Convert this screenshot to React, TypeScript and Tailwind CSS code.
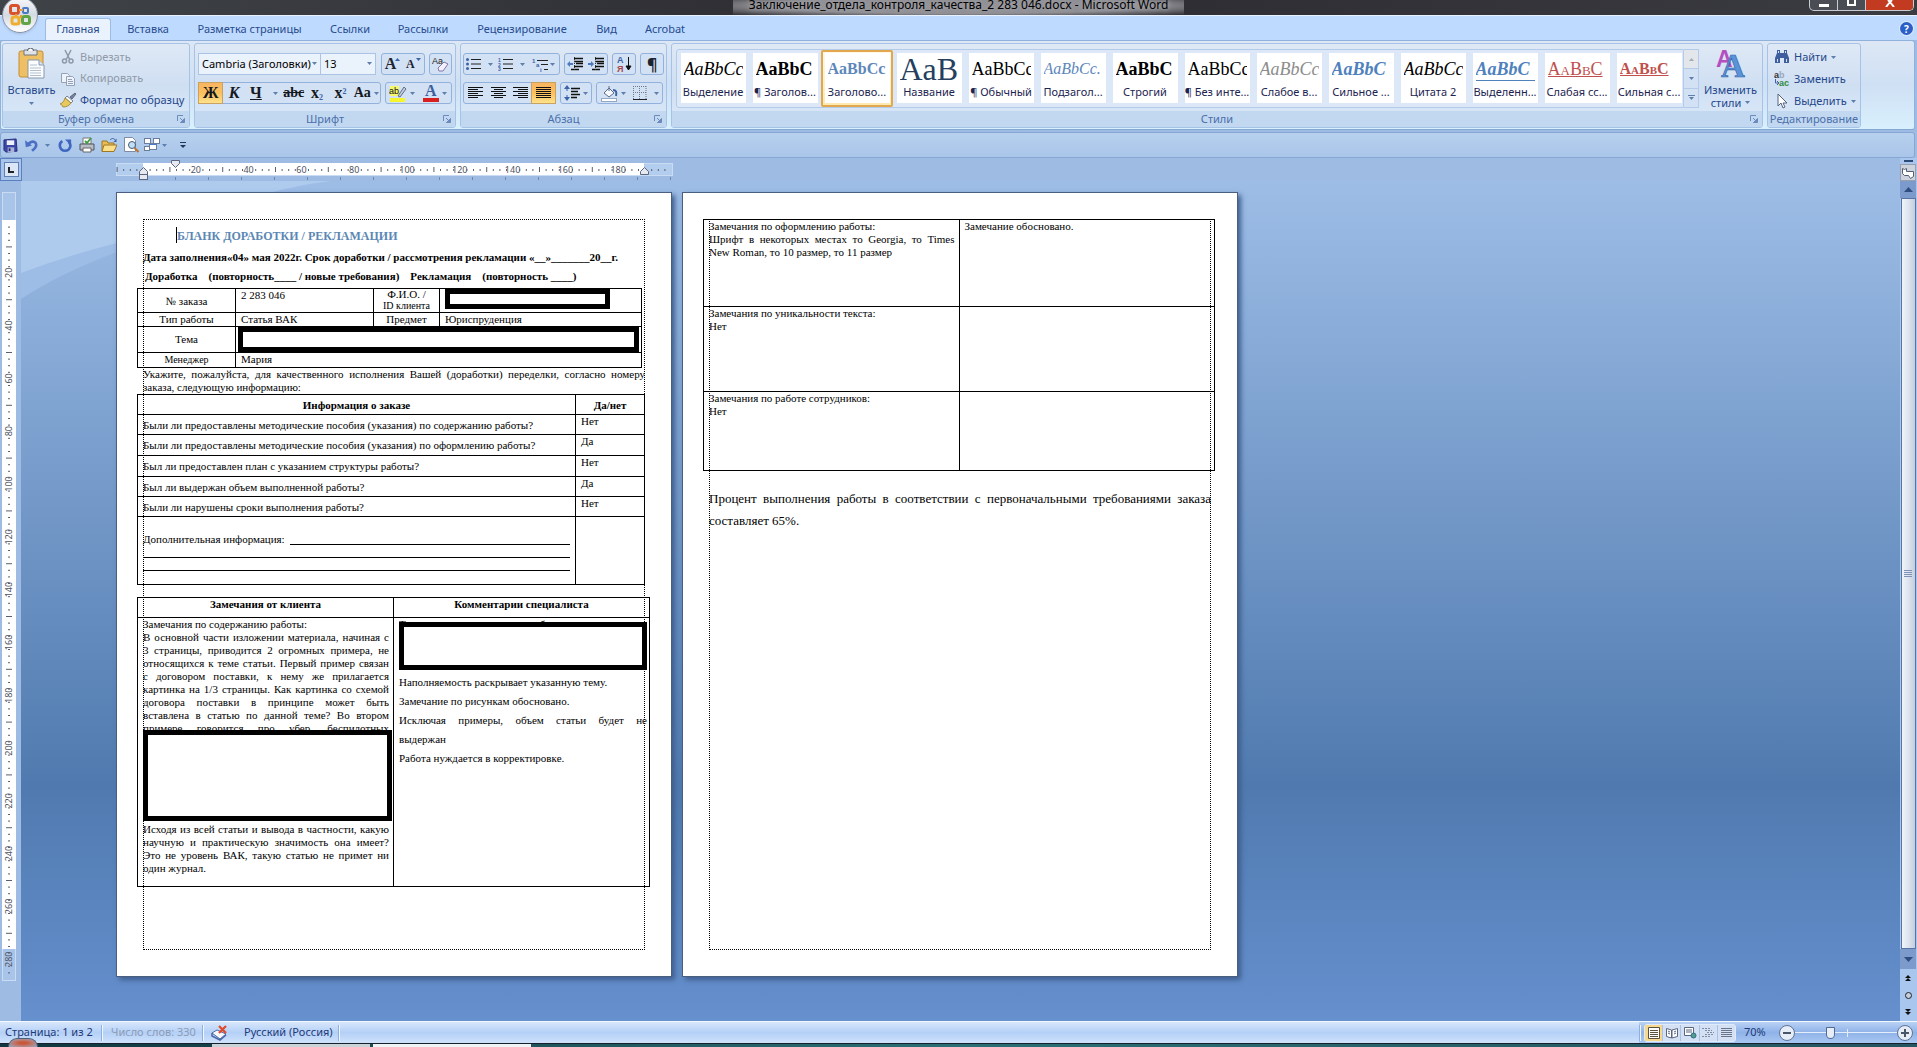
import React from "react";

const UI = "font-['Noto_Sans','Open_Sans',sans-serif]";
const SERIF = "font-['Liberation_Serif',serif]";

function Caret({ className = "" }: { className?: string }) {
  return (
    <svg className={`shrink-0 ${className}`} width="5" height="3" viewBox="0 0 5 3" aria-hidden="true">
      <path d="M0 0h5L2.500 3z" fill="#5d7fae" />
    </svg>
  );
}

function Launcher() {
  return (
    <button aria-label="Параметры" className="absolute right-1 top-1 h-2 w-2">
      <svg width="8" height="8" viewBox="0 0 8 8" fill="none" stroke="#6a8bbb">
        <path d="M.5 6V.5H6M3 3l3 3" />
        <path d="M7.500 3.500v4h-4z" fill="#6a8bbb" />
      </svg>
    </button>
  );
}

function Group({ label, className = "", launcher = true, children }: { label: string; className?: string; launcher?: boolean; children: React.ReactNode }) {
  return (
    <section
      aria-label={label}
      className={`flex h-[85px] flex-col overflow-hidden rounded-[3px] border border-[#a5c3e6] bg-linear-to-b from-[#dfe9f6] via-[#cfdff2] to-[#dceafa] ${className}`}
    >
      <div className="min-h-0 flex-1">{children}</div>
      <div className="relative h-4 shrink-0 bg-[#c2d8f1] text-center leading-4 whitespace-nowrap text-[#4a6fa9]">
        {label}
        {launcher && <Launcher />}
      </div>
    </section>
  );
}

function Tools({ className = "", children }: { className?: string; children: React.ReactNode }) {
  return <div className={`flex h-[22px] items-stretch rounded-[3px] border border-[#92b1dc] bg-[#d2e1f4] ${className}`}>{children}</div>;
}

function Tool({ label, on = false, className = "", children }: { label: string; on?: boolean; className?: string; children: React.ReactNode }) {
  return (
    <button
      aria-label={label}
      className={`flex min-w-0 flex-1 items-center justify-center gap-[3px] ${on ? "bg-linear-to-b from-[#f9b563] via-[#fbc05c] to-[#fde28b] ring-1 ring-[#c9a25f]" : ""} ${className}`}
    >
      {children}
    </button>
  );
}

function Lines({ widths, align }: { widths: number[]; align: "l" | "c" | "r" }) {
  return (
    <svg width="15" height="12" viewBox="0 0 15 12" shapeRendering="crispEdges">
      {widths.map((w, i) => (
        <rect key={i} x={align === "l" ? 0 : align === "r" ? 15 - w : (15 - w) / 2} y={i * 2} width={w} height="1" fill="#111" />
      ))}
    </svg>
  );
}

function ListIcon({ marks }: { marks: string[] }) {
  return (
    <svg width="15" height="14" viewBox="0 0 15 14">
      {marks.map((m, i) => (
        <g key={i}>
          {m === "•" ? (
            <circle cx="1.500" cy={2.5 + i * 4.5} r="1.500" fill="#3c62a8" />
          ) : (
            <text x="0" y={5 + i * 4.5} fontSize="5" fontWeight="bold" fill="#3c62a8" fontFamily="Liberation Sans">
              {m}
            </text>
          )}
          <rect x="5" y={2 + i * 4.5} width="10" height="1" fill="#222" />
        </g>
      ))}
    </svg>
  );
}

function IndentIcon({ right = false }: { right?: boolean }) {
  return (
    <svg width="17" height="14" viewBox="0 0 17 14">
      <path d="M7 1.500h9M7 4.500h9M9 6.500h7M7 9.500h9M4 12.500h8" stroke="#111" strokeWidth="1.300" />
      <path d="M7.500 0v14" stroke="#333" strokeDasharray="1 1" />
      <path d={right ? "M6 7L3 4v2H0v2h3v2z" : "M0 7l3-3v2h3v2H3v2z"} fill="#4d77bf" />
    </svg>
  );
}

function Gem() {
  return (
    <svg width="24" height="26" viewBox="0 0 24 26">
      <g fill="none" strokeWidth="3">
        <rect x="2.500" y="3.500" width="8" height="8" rx="2" stroke="#d9512c" />
        <rect x="15" y="6" width="5" height="5" rx="1" stroke="#4a7ac4" strokeWidth="2" />
        <rect x="4" y="15" width="7" height="7" rx="2" stroke="#f0ae2e" />
        <rect x="14.500" y="14.500" width="7" height="7" rx="2" stroke="#5fa545" />
      </g>
      <path d="M11 8h4M13 13v3M8 12v2" stroke="#e89b3c" strokeWidth="2" />
    </svg>
  );
}

function PasteIcon() {
  return (
    <svg width="27" height="31" viewBox="0 0 27 31">
      <rect x="1" y="3" width="24" height="26" rx="2" fill="#eebf63" stroke="#c48f38" />
      <path d="M6 2h13v5H6z" fill="#dfe3e8" stroke="#6f7680" />
      <path d="M9.500 3a3 3 0 0 1 6 0" fill="#f7f7f7" stroke="#4c5560" />
      <path d="M10 12h11l5 5v13H10z" fill="#fcfdff" stroke="#8797ae" />
      <path d="M21 12v5h5" fill="#dbe4f2" stroke="#8797ae" />
      <path d="M12 17h7M12 20h11M12 22.500h11M12 25h11M12 27.500h11" stroke="#b4bfce" />
    </svg>
  );
}

function ScissorsIcon() {
  return (
    <svg width="16" height="16" viewBox="0 0 16 16" fill="none" stroke="#8d98a8">
      <path d="M5 1l4.500 9M11 1L6.500 10" strokeWidth="1.500" />
      <circle cx="4.500" cy="12" r="2" strokeWidth="1.500" />
      <circle cx="11" cy="12" r="2" strokeWidth="1.500" />
    </svg>
  );
}

function CopyIcon() {
  return (
    <svg width="16" height="16" viewBox="0 0 16 16" fill="#eef3fa" stroke="#93a2b8">
      <path d="M1.500 2.500h6l2 2v7h-8z" />
      <path d="M6.500 5.500h6l2 2v7h-8z" />
      <path d="M8 8.500h4M8 10.500h5M8 12.500h5" />
    </svg>
  );
}

function BrushIcon() {
  return (
    <svg width="17" height="16" viewBox="0 0 17 16">
      <path d="M10 5l5-4 1 1-4 5z" fill="#7a86a0" stroke="#3f4a63" strokeWidth=".7" />
      <path d="M7 4l6 5-2 2-6-5z" fill="#f5f7fa" stroke="#5b667c" strokeWidth=".8" />
      <path d="M5 6l6 5c-2 3-5 4-8 4-1-2-2-3-3-3 3-1 4-3 5-6z" fill="#e9c95f" stroke="#98812d" strokeWidth=".8" />
    </svg>
  );
}

const svg16 = { width: 16, height: 16, viewBox: "0 0 16 16" };

function SaveIcon() {
  return (
    <svg {...svg16} width="15" height="15">
      <path d="M1 2l13-1 1 13-12 1-2-2z" fill="#3b46a5" stroke="#252d77" />
      <path d="M4 2.500h8v5H4z" fill="#eef1fa" />
      <path d="M5 10h7v5H5z" fill="#aab4d8" />
      <path d="M6 11h2v3H6z" fill="#252d77" />
    </svg>
  );
}
function UndoIcon() {
  return (
    <svg {...svg16} width="14" height="15" fill="none">
      <path d="M4 6c5-5 11-1 8 4-1 2-3 3-4 4" stroke="#4a6fc4" strokeWidth="3" />
      <path d="M0 2l1 8 7-2z" fill="#4a6fc4" />
    </svg>
  );
}
function RedoIcon() {
  return (
    <svg {...svg16} width="14" height="15" fill="none">
      <path d="M5 3C0 6 2 14 8 14s8-7 4-10" stroke="#3f66c0" strokeWidth="3" />
      <path d="M8 1h7v7z" fill="#3f66c0" />
    </svg>
  );
}
function PrintIcon() {
  return (
    <svg {...svg16}>
      <path d="M4 1h8v6H4z" fill="#fff" stroke="#777" />
      <path d="M1 7h14v6H1z" fill="#b7bcc5" stroke="#4e545e" />
      <path d="M4 11h8v4H4z" fill="#fff" stroke="#666" />
      <path d="M6 4l2 2 4-5" fill="none" stroke="#3d9c3d" strokeWidth="1.800" />
    </svg>
  );
}
function OpenIcon() {
  return (
    <svg {...svg16}>
      <path d="M1 4h5l1 2h6v8H1z" fill="#e9bd55" stroke="#9d7724" />
      <path d="M3 8h13l-3 6.500H1z" fill="#fbdf8b" stroke="#9d7724" />
      <path d="M9 3c2-2 4-2 5 0" fill="none" stroke="#3c62a8" />
      <path d="M15.500 1.500V5h-3z" fill="#3c62a8" />
    </svg>
  );
}
function PreviewIcon() {
  return (
    <svg {...svg16}>
      <path d="M1.500.5h8l3 3v11h-11z" fill="#fff" stroke="#7d8ba3" />
      <circle cx="9" cy="8" r="3.500" fill="#bfe0f5" stroke="#4d5a70" />
      <path d="M11.500 11l4 4" stroke="#b97634" strokeWidth="2" />
    </svg>
  );
}
function WindowsIcon() {
  return (
    <svg {...svg16} fill="#fff" stroke="#6b7d9a">
      <rect x=".5" y="1.500" width="6" height="5" />
      <rect x="9.500" y="1.500" width="6" height="5" />
      <rect x=".5" y="9.500" width="5" height="4" />
      <rect x="5.500" y="6.500" width="7" height="6" />
      <path d="M5.500 7.500h7" stroke="#4b78c8" />
    </svg>
  );
}

const TILES: { name: string; text: string; cls: string; on?: boolean }[] = [
  { name: "Выделение", text: "AaBbCc", cls: "text-lg italic text-black" },
  { name: "¶ Заголов...", text: "AaBbC", cls: "text-lg font-bold text-black" },
  { name: "Заголово...", text: "AaBbCc", cls: "text-base font-bold text-[#5d87bb]", on: true },
  { name: "Название", text: "AaB", cls: "text-[32px] text-[#243f60]" },
  { name: "¶ Обычный", text: "AaBbCc", cls: "text-lg text-black" },
  { name: "Подзагол...", text: "AaBbCc.", cls: "text-base italic text-[#5d87bb]" },
  { name: "Строгий", text: "AaBbC", cls: "text-lg font-bold text-black" },
  { name: "¶ Без инте...", text: "AaBbCc", cls: "text-lg text-black" },
  { name: "Слабое в...", text: "AaBbCc", cls: "text-lg italic text-[#8c8c8c]" },
  { name: "Сильное ...", text: "AaBbC", cls: "text-lg font-bold italic text-[#4f81bd]" },
  { name: "Цитата 2", text: "AaBbCc", cls: "text-lg italic text-black" },
  { name: "Выделенн...", text: "AaBbC", cls: "text-lg font-bold italic text-[#4f81bd] border-b border-[#4f81bd]" },
  { name: "Слабая сс...", text: "AaBbC", cls: "text-lg text-[#c0504d] underline [font-variant:small-caps]" },
  { name: "Сильная с...", text: "AaBbC", cls: "text-base font-bold text-[#c0504d] underline [font-variant:small-caps]" },
];

const TABS = [
  { name: "Вставка", w: "w-[70px]" },
  { name: "Разметка страницы", w: "w-[133px]" },
  { name: "Ссылки", w: "w-[68px]" },
  { name: "Рассылки", w: "w-[78px]" },
  { name: "Рецензирование", w: "w-[120px]" },
  { name: "Вид", w: "w-[49px]" },
  { name: "Acrobat", w: "w-[68px]" },
];

function TitleBar() {
  return (
    <header className="relative h-4 shrink-0 border-b border-[#e8f2ff] bg-linear-to-r from-[#3f4348] via-[#2b2a30] to-[#3b3b42]">
      <div className="flex h-full justify-center overflow-hidden">
        <h1 className="-mt-1 bg-radial from-[#8f8f94] from-60% to-transparent to-100% px-4 text-xs leading-[18px] text-black [text-shadow:0_0_5px_#a9a9ae,0_0_8px_#a9a9ae]">
          Заключение_отдела_контроля_качества_2 283 046.docx - Microsoft Word
        </h1>
      </div>
      <div className="absolute right-[3px] top-0 flex h-[11px] overflow-hidden rounded-b-[5px] border border-t-0 border-[#c9cdd3] bg-[#4a4d54]">
        <button aria-label="Свернуть" className="flex w-7 items-center justify-center border-r border-[#c9cdd3]">
          <span className="h-[3px] w-[10px] bg-white" />
        </button>
        <button aria-label="Развернуть" className="flex w-7 items-start justify-center border-r border-[#c9cdd3]">
          <span className="h-[6px] w-[9px] border-2 border-t-0 border-white" />
        </button>
        <button aria-label="Закрыть" className="flex w-[47px] items-start justify-center bg-[#c23a1f]">
          <svg width="10" height="7" viewBox="0 0 10 7">
            <path d="M1 7l4-5 4 5M3 0l2 2 2-2" stroke="#fff" strokeWidth="2" fill="none" />
          </svg>
        </button>
      </div>
      <button
        aria-label="Кнопка Office"
        className="absolute left-[2px] -top-[3px] z-10 flex h-9 w-9 items-center justify-center rounded-full border border-[#8793a6] bg-linear-to-b from-[#f7f8fa] via-[#d5dae2] to-white shadow"
      >
        <Gem />
      </button>
    </header>
  );
}

function TabBar() {
  return (
    <nav className="flex h-6 shrink-0 items-end bg-[#bedaff] pl-[45px] text-[#274a8c]">
      <button className="h-[22px] w-[66px] rounded-t-[3px] border border-b-0 border-[#9dbbe0] bg-[#e9f2fd]">Главная</button>
      <div className="w-[2px]" />
      {TABS.map((t) => (
        <button key={t.name} className={`h-[22px] whitespace-nowrap ${t.w}`}>
          {t.name}
        </button>
      ))}
      <button aria-label="Справка" className="mr-1 mb-[5px] ml-auto flex h-[13px] w-[13px] items-center justify-center rounded-full bg-[#2c5fc7] text-[10px] leading-none font-bold text-white ring-1 ring-[#dfe9f8]">
        ?
      </button>
    </nav>
  );
}

function Ribbon() {
  return (
    <div className="mr-[2px] flex h-[90px] shrink-0 items-start gap-1 rounded-[3px] border border-[#8fb1dc] border-b-[#86a7d4] bg-linear-to-b from-[#dde7f5] via-[#cfe0f4] to-[#d9f0fd] pt-[2px] pl-px text-[#24468a]">
      <Group label="Буфер обмена" className="w-[188px] shrink-0">
        <div className="flex h-full">
          <button className="flex w-[57px] flex-col items-center pt-1">
            <PasteIcon />
            <span className="mt-[3px] leading-4">Вставить</span>
            <Caret className="mt-1" />
          </button>
          <div className="flex flex-col pt-[2px]">
            <button className="flex h-[22px] items-center gap-1 text-[#8f99a8]"><ScissorsIcon />Вырезать</button>
            <button className="flex h-[22px] items-center gap-1 text-[#8f99a8]"><CopyIcon />Копировать</button>
            <button className="flex h-[22px] items-center gap-[3px] whitespace-nowrap"><BrushIcon />Формат по образцу</button>
          </div>
        </div>
      </Group>

      <Group label="Шрифт" className="w-[262px] shrink-0">
        <div className="flex flex-col gap-[7px] px-[3px] pt-[9px]">
          <div className="flex items-center gap-1">
            <div className="mr-px flex h-[22px]">
              <div className="relative">
                <select aria-label="Шрифт" className="h-[22px] w-[123px] appearance-none border border-[#abc4e6] bg-[#eaf2fb] pl-[3px] text-black">
                  <option>Cambria (Заголовки)</option>
                </select>
                <Caret className="pointer-events-none absolute top-[9px] right-1" />
              </div>
              <div className="relative -ml-px">
                <select aria-label="Размер шрифта" className="h-[22px] w-[56px] appearance-none border border-[#abc4e6] bg-[#eaf2fb] pl-[3px] text-black">
                  <option>13</option>
                </select>
                <Caret className="pointer-events-none absolute top-[9px] right-1" />
              </div>
            </div>
            <Tools className="w-[45px] font-['Liberation_Serif',serif] font-bold text-[#1d2430]">
              <Tool label="Увеличить размер">
                <span className="text-base leading-none">A</span>
                <svg className="mt-1 -ml-1 self-start" width="5" height="3"><path d="M0 3h5L2.500 0z" fill="#3c62a8" /></svg>
              </Tool>
              <Tool label="Уменьшить размер">
                <span className="text-xs leading-none">A</span>
                <svg className="mt-1 -ml-[2px] self-start" width="5" height="3"><path d="M0 0h5L2.500 3z" fill="#3c62a8" /></svg>
              </Tool>
            </Tools>
            <Tools className="w-6">
              <Tool label="Очистить формат">
                <svg width="18" height="17" viewBox="0 0 18 17">
                  <text x="1" y="8" fontSize="9" fill="#222" fontFamily="Liberation Sans">Aa</text>
                  <path d="M7 12l6-6 4 2-5 7H8z" fill="#f3f0fb" stroke="#8078a8" />
                </svg>
              </Tool>
            </Tools>
          </div>
          <div className="flex gap-1">
            <Tools className="w-[184px] font-['Liberation_Serif',serif] text-base text-[#14181f]">
              <Tool label="Полужирный" on className="font-bold">Ж</Tool>
              <Tool label="Курсив" className="font-bold italic">К</Tool>
              <Tool label="Подчеркнутый" className="w-9 flex-none font-bold"><span className="underline">Ч</span><Caret className="ml-2" /></Tool>
              <Tool label="Зачеркнутый" className="text-sm font-bold"><span className="line-through">abc</span></Tool>
              <Tool label="Подстрочный" className="font-bold"><span>x<sub className="text-[8px] text-[#3c62a8]">2</sub></span></Tool>
              <Tool label="Надстрочный" className="font-bold"><span>x<sup className="text-[8px] text-[#3c62a8]">2</sup></span></Tool>
              <Tool label="Регистр" className="w-7 flex-none text-sm font-bold"><span>Aa</span><Caret /></Tool>
            </Tools>
            <Tools className="w-[67px]">
              <Tool label="Выделение цветом">
                <svg width="18" height="18" viewBox="0 0 18 18">
                  <rect x="1" y="2" width="9" height="10" fill="#f7f76a" />
                  <text x="0" y="10" fontSize="9" fill="#111" fontFamily="Liberation Sans">ab</text>
                  <path d="M9 12l6-9 2 2-6 8z" fill="#c3cbe0" stroke="#46536f" strokeWidth=".8" />
                  <rect x="1" y="14" width="15" height="4" fill="#f4f62b" />
                </svg>
                <Caret />
              </Tool>
              <Tool label="Цвет текста">
                <svg width="16" height="18" viewBox="0 0 16 18">
                  <text x="2" y="12" fontSize="16" fontWeight="bold" fill="#3c5f9f" fontFamily="Liberation Serif">A</text>
                  <rect y="14" width="16" height="4" fill="#d8201f" />
                </svg>
                <Caret />
              </Tool>
            </Tools>
          </div>
        </div>
      </Group>

      <Group label="Абзац" className="w-[207px] shrink-0">
        <div className="flex flex-col gap-[7px] px-[2px] pt-[9px]">
          <div className="flex gap-1">
            <Tools className="w-[98px]">
              <Tool label="Маркеры"><ListIcon marks={["•", "•", "•"]} /><Caret className="ml-1" /></Tool>
              <Tool label="Нумерация"><ListIcon marks={["1", "2", "3"]} /><Caret className="ml-1" /></Tool>
              <Tool label="Многоуровневый список">
                <svg width="17" height="15" viewBox="0 0 17 15">
                  <text x="0" y="6" fontSize="6" fontWeight="bold" fill="#3c62a8" fontFamily="Liberation Sans">1</text>
                  <text x="4" y="10" fontSize="6" fontWeight="bold" fill="#3c62a8" fontFamily="Liberation Sans">a</text>
                  <text x="8" y="15" fontSize="6" fontWeight="bold" fill="#3c62a8" fontFamily="Liberation Sans">i</text>
                  <path d="M5 3.500h11M9 7.500h7M12 12.500h4" stroke="#222" />
                </svg>
                <Caret className="-ml-[2px]" />
              </Tool>
            </Tools>
            <Tools className="w-[45px]">
              <Tool label="Уменьшить отступ"><IndentIcon /></Tool>
              <Tool label="Увеличить отступ"><IndentIcon right /></Tool>
            </Tools>
            <Tools className="w-6">
              <Tool label="Сортировка">
                <svg width="16" height="18" viewBox="0 0 16 18">
                  <text x="1" y="8" fontSize="9" fontWeight="bold" fill="#3c62a8" fontFamily="Liberation Sans">А</text>
                  <text x="1" y="17" fontSize="9" fontWeight="bold" fill="#a8474d" fontFamily="Liberation Sans">Я</text>
                  <path d="M12.500 2v12M10 11l2.500 4 2.500-4z" stroke="#111" fill="#111" />
                </svg>
              </Tool>
            </Tools>
            <Tools className="w-6">
              <Tool label="Знаки абзаца" className="text-base font-bold text-[#1d2430]">¶</Tool>
            </Tools>
          </div>
          <div className="flex gap-1">
            <Tools className="w-[93px]">
              <Tool label="По левому краю"><Lines align="l" widths={[15, 10, 15, 10, 15, 10]} /></Tool>
              <Tool label="По центру"><Lines align="c" widths={[15, 9, 15, 9, 15, 9]} /></Tool>
              <Tool label="По правому краю"><Lines align="r" widths={[15, 10, 15, 10, 15, 10]} /></Tool>
              <Tool label="По ширине" on><Lines align="l" widths={[15, 15, 15, 15, 15, 15]} /></Tool>
            </Tools>
            <Tools className="w-8">
              <Tool label="Интервал">
                <svg width="16" height="16" viewBox="0 0 16 16">
                  <path d="M3 0l3 4H0zM3 16l3-4H0z" fill="#3c62a8" />
                  <path d="M3 3v3M3 10v3" stroke="#3c62a8" />
                  <path d="M7 3.500h9M7 6.500h7M7 9.500h9M7 12.500h6" stroke="#111" strokeWidth="1.300" />
                </svg>
                <Caret />
              </Tool>
            </Tools>
            <Tools className="w-[67px]">
              <Tool label="Заливка">
                <svg width="17" height="17" viewBox="0 0 17 17">
                  <path d="M3 8l5-5 5 5-5 4z" fill="#f6f8fb" stroke="#5b6c8a" />
                  <path d="M8 1v5" stroke="#5b6c8a" />
                  <path d="M12 5c3 0 4 2 3 6" stroke="#3c62a8" strokeWidth="2" fill="none" />
                  <rect x=".5" y="13.500" width="15" height="3" fill="#fff" stroke="#93a8c6" />
                </svg>
                <Caret />
              </Tool>
              <Tool label="Границы">
                <svg width="14" height="14" viewBox="0 0 14 14" fill="none">
                  <path d="M.5 0v13M6.500 0v13M13 0v13M0 .5h13M0 6.500h13" stroke="#6d7890" strokeDasharray="1 1" />
                  <path d="M0 13.500h14" stroke="#222" />
                </svg>
                <Caret className="ml-1" />
              </Tool>
            </Tools>
          </div>
        </div>
      </Group>

      <Group label="Стили" className="min-w-0 flex-1">
        <div className="flex h-full pt-[5px] pl-1">
          <div className="flex h-[59px] min-w-0 flex-1 overflow-hidden rounded-l-[3px] border border-[#b3cbe9] bg-[#dce8f7]">
            {TILES.map((t) => (
              <button key={t.name} className={`flex w-[72px] shrink-0 flex-col p-px pb-[2px] ${t.on ? "rounded-[2px] border-2 border-[#e2a84e] bg-linear-to-b from-[#fff8e6] to-[#fde9b0]" : "border-2 border-transparent"}`}>
                <span className="mx-auto flex h-full w-[65px] flex-col overflow-hidden bg-white px-[3px]">
                  <span className={`h-7 overflow-hidden text-left leading-8 whitespace-nowrap ${SERIF} ${t.cls}`}>{t.text}</span>
                  <span className="mt-[3px] flex justify-center text-[11px] leading-4 whitespace-nowrap text-[#1c2450]">{t.name}</span>
                </span>
              </button>
            ))}
          </div>
          <div className="flex h-[59px] w-[15px] flex-col border border-l-0 border-[#b3cbe9] bg-[#d2e1f4]">
            <button aria-label="Вверх" className="flex flex-1 items-center justify-center bg-[#e3e6ea]"><svg width="5" height="3"><path d="M0 3h5L2.500 0z" fill="#a6acb6" /></svg></button>
            <button aria-label="Вниз" className="flex flex-1 items-center justify-center border-y border-[#b3cbe9]"><Caret /></button>
            <button aria-label="Дополнительно" className="flex flex-1 flex-col items-center justify-center gap-px"><span className="h-px w-[7px] bg-[#5d7fae]" /><Caret /></button>
          </div>
          <button className="flex w-[63px] flex-col items-center leading-[13px]">
            <svg width="31" height="29" viewBox="0 0 31 29">
              <text x="1" y="18" fontSize="23" fill="#b54fc0" fontWeight="bold" fontFamily="Liberation Sans">A</text>
              <text x="6" y="28" fontSize="33" fill="#5b93d8" stroke="#2f5fa8" strokeWidth=".6" fontWeight="bold" fontFamily="Liberation Serif">A</text>
            </svg>
            <span className="mt-[5px]">Изменить</span>
            <span className="flex items-center gap-1">стили <Caret /></span>
          </button>
        </div>
      </Group>

      <Group label="Редактирование" launcher={false} className="mr-[53px] w-[94px] shrink-0">
        <div className="flex flex-col pt-[2px] pl-[6px]">
          <button className="flex h-[22px] items-center gap-1">
            <svg {...svg16} fill="#3d5f9d">
              <path d="M3 1h3v3h4V1h3v3l2 5v5h-5v-5H6v5H1V9l2-5z" />
              <path d="M3 10h1v3H3zM12 10h1v3h-1zM4 2h1v2H4zM11 2h1v2h-1z" fill="#d6e3f5" />
            </svg>
            Найти <Caret />
          </button>
          <button className="flex h-[22px] items-center gap-1">
            <svg {...svg16}>
              <text x="0" y="7" fontSize="9" fontWeight="bold" fill="#333" fontFamily="Liberation Sans">a</text>
              <text x="5" y="7" fontSize="9" fontWeight="bold" fill="#9aa6b8" fontFamily="Liberation Sans">b</text>
              <text x="5" y="15" fontSize="9" fontWeight="bold" fill="#2f8b3d" fontFamily="Liberation Sans">ac</text>
              <path d="M1.500 8v4h3M3 10l2 2-2 2" stroke="#3c62a8" fill="none" />
            </svg>
            Заменить
          </button>
          <button className="flex h-[22px] items-center gap-1 whitespace-nowrap">
            <svg {...svg16}>
              <path d="M4 1v12l3-3 2 5 2-1-2-4h4z" fill="#fff" stroke="#55647e" />
            </svg>
            Выделить <Caret />
          </button>
        </div>
      </Group>
    </div>
  );
}

function QuickAccess() {
  return (
    <div className="mt-[2px] mr-[2px] flex h-[26px] shrink-0 items-center rounded-[3px] border border-[#86a7d4] bg-linear-to-b from-[#b7d0ee] to-[#a9c5e9] pl-[2px]">
      <button aria-label="Сохранить"><SaveIcon /></button>
      <button aria-label="Отменить" className="ml-[7px] flex items-center gap-[6px]"><UndoIcon /><Caret /></button>
      <button aria-label="Повторить" className="ml-2"><RedoIcon /></button>
      <button aria-label="Печать" className="ml-[7px]"><PrintIcon /></button>
      <button aria-label="Открыть" className="ml-[6px]"><OpenIcon /></button>
      <button aria-label="Просмотр" className="ml-[6px]"><PreviewIcon /></button>
      <button aria-label="Окна" className="ml-[5px] flex items-center gap-[2px]"><WindowsIcon /><Caret /></button>
      <button aria-label="Настройка" className="ml-[13px] flex flex-col items-center gap-[2px]"><span className="h-px w-[6px] bg-[#22375c]" /><svg width="6" height="3"><path d="M0 0h6L3 3z" fill="#22375c" /></svg></button>
    </div>
  );
}

const STEP = 6.6;

function HorizontalRuler() {
  const marks = [];
  for (let i = -4; i <= 79; i++) {
    const x = 27 + i * STEP;
    if (i > 0 && i % 8 === 0) {
      marks.push(<text key={i} x={x} y="15" textAnchor="middle" fontSize="9" fill="#4f5563">{(i / 8) * 20}</text>);
    } else if (i % 4 === 0) {
      if (i !== 0 && i !== 76) marks.push(<rect key={i} x={x} y="9" width="1" height="5" fill="#5a6070" />);
    } else {
      marks.push(<rect key={i} x={x} y="11" width="1" height="2" fill="#5a6070" />);
    }
  }
  const ticks = Array.from({ length: 16 }, (_, i) => <rect key={i} x={59 + i * 33} y="19" width="1" height="3" fill="#7088ac" />);
  return (
    <svg width="557" height="23" viewBox="0 0 557 23" fontFamily="Noto Sans" className="ml-[94px] shrink-0">
      <rect x=".5" y="5.500" width="556" height="12" fill="#b3cdee" stroke="#c9dcf4" />
      <rect x="27" y="5" width="501" height="12" fill="#fff" />
      {marks}
      {ticks}
      <path d="M55.500 2.500h8v3l-4 4-4-4z" fill="#e6e9ef" stroke="#5b6780" />
      <path d="M23.500 16.500v-3l4-4 4 4v3z" fill="#e6e9ef" stroke="#5b6780" />
      <rect x="23.500" y="16.500" width="8" height="5" fill="#e6e9ef" stroke="#5b6780" />
      <path d="M524.500 16.500v-3l4-4 4 4v3z" fill="#e6e9ef" stroke="#5b6780" />
    </svg>
  );
}

function VerticalRuler() {
  const marks = [];
  for (let i = 1; i <= 114; i++) {
    const y = 28 + i * STEP;
    if (i % 8 === 0) {
      marks.push(<text key={i} x="10" y={y} transform={`rotate(-90 10 ${y})`} textAnchor="middle" fontSize="9" fill="#4f5563">{(i / 8) * 20}</text>);
    } else if (i % 4 === 0) {
      marks.push(<rect key={i} x="4" y={y} width="6" height="1" fill="#5a6070" />);
    } else {
      marks.push(<rect key={i} x="6" y={y} width="2" height="1" fill="#5a6070" />);
    }
  }
  return (
    <div className="w-[21px] shrink-0 bg-[#9dbbe3] pt-[11px] pl-[2px]">
      <svg width="14" height="789" viewBox="0 0 14 789" fontFamily="Noto Sans">
        <rect x=".5" y=".5" width="13" height="788" fill="#a9c4e9" stroke="#c9dcf4" />
        <rect x="0" y="28" width="14" height="729" fill="#fff" />
        {marks}
      </svg>
    </div>
  );
}

function Sheet({ children, label }: { children: React.ReactNode; label: string }) {
  return (
    <article aria-label={label} className={`relative min-h-[785px] w-[556px] shrink-0 border border-[#4a5f80] bg-white px-[26px] pt-[26px] text-[11px] leading-[13px] text-black shadow-[3px_3px_5px_#3f5f8f] ${SERIF}`}>
      {children}
      <div className="pointer-events-none absolute top-[26px] right-[26px] bottom-[26px] left-[26px] border border-dotted border-black" />
    </article>
  );
}

function Spread({ lines }: { lines: string[] }) {
  return (
    <p>
      {lines.map((l, i) => (
        <span key={l} className={`block whitespace-nowrap ${i < lines.length - 1 ? "[text-align-last:justify]" : ""}`}>
          {l}
        </span>
      ))}
    </p>
  );
}

const TD = "border border-black p-0 align-top";
const QUESTIONS = [
  ["Были ли предоставлены методические пособия (указания) по содержанию работы?", "Нет"],
  ["Были ли предоставлены методические пособия (указания) по оформлению работы?", "Да"],
  ["Был ли предоставлен план с указанием структуры работы?", "Нет"],
  ["Был ли выдержан объем выполненной работы?", "Да"],
  ["Были ли нарушены сроки выполнения работы?", "Нет"],
];

function FirstPage() {
  return (
    <Sheet label="Страница 1">
      <h2 className="ml-[33px] border-l border-black pt-[10px] text-[12px] leading-[14px] font-bold text-[#5b87b5] [border-image:linear-gradient(to_bottom,transparent_35%,black_35%)_1]">
        БЛАНК ДОРАБОТКИ / РЕКЛАМАЦИИ
      </h2>
      <p className="mt-2 font-bold whitespace-nowrap">Дата заполнения«04» мая 2022г. Срок доработки / рассмотрения рекламации «__»_______20__г.</p>
      <p className="mt-[6px] ml-[2px] font-bold whitespace-pre">Доработка    (повторность____ / новые требования)    Рекламация    (повторность ____)</p>

      <table className="mt-[5px] -ml-[6px] w-[505px] table-fixed border-collapse">
        <colgroup>
          <col className="w-[98px]" />
          <col className="w-[138px]" />
          <col className="w-[66px]" />
          <col />
        </colgroup>
        <tbody>
          <tr className="h-6">
            <td className={`${TD} pt-[6px]! text-center`}>№ заказа</td>
            <td className={`${TD} pl-[5px]!`}>2 283 046</td>
            <td className={`${TD} text-center leading-[11px]`}>Ф.И.О. /<br /><span className="text-[10px]">ID клиента</span></td>
            <td className={`${TD} pl-[5px]!`}><div className="h-5 w-[165px] border-5 border-black bg-white" /></td>
          </tr>
          <tr className="h-[14px]">
            <td className={`${TD} text-center`}>Тип работы</td>
            <td className={`${TD} pl-[5px]!`}>Статья ВАК</td>
            <td className={`${TD} text-center`}>Предмет</td>
            <td className={`${TD} pl-[5px]!`}>Юриспруденция</td>
          </tr>
          <tr className="h-[26px]">
            <td className={`${TD} pt-[6px]! text-center`}>Тема</td>
            <td colSpan={3} className={`${TD} px-[2px]!`}><div className="h-[25px] border-5 border-black bg-white" /></td>
          </tr>
          <tr className="h-[15px]">
            <td className={`${TD} text-center`}><span className="text-[10px]">Менеджер</span></td>
            <td colSpan={3} className={`${TD} pl-[5px]!`}>Мария</td>
          </tr>
        </tbody>
      </table>

      <Spread lines={["Укажите, пожалуйста, для качественного исполнения Вашей (доработки) переделки, согласно номеру", "заказа, следующую информацию:"]} />

      <table className="-ml-[6px] w-[508px] table-fixed border-collapse">
        <colgroup>
          <col />
          <col className="w-[69px]" />
        </colgroup>
        <thead>
          <tr className="h-5">
            <th className={`${TD} pt-1!`}>Информация о заказе</th>
            <th className={`${TD} pt-1!`}>Да/нет</th>
          </tr>
        </thead>
        <tbody>
          {QUESTIONS.map(([q, a], i) => (
            <tr key={q} className={i === 1 || i === 2 ? "h-[21px]" : "h-5"}>
              <td className={`${TD} pt-1! pl-[5px]!`}>{q}</td>
              <td className={`${TD} pl-[5px]!`}>{a}</td>
            </tr>
          ))}
          <tr className="h-[68px]">
            <td className={`${TD} px-[5px]! pt-4!`}>
              <div className="flex items-end gap-[5px]">
                <span>Дополнительная информация:</span>
                <span className="mb-px flex-1 border-b border-black" />
              </div>
              <div className="h-3 border-b border-black" />
              <div className="h-[13px] border-b border-black" />
            </td>
            <td className={TD} />
          </tr>
        </tbody>
      </table>

      <table className="mt-3 -ml-[6px] w-[513px] table-fixed border-collapse">
        <colgroup>
          <col className="w-[256px]" />
          <col />
        </colgroup>
        <thead>
          <tr className="h-5">
            <th className={TD}>Замечания от клиента</th>
            <th className={TD}>Комментарии специалиста</th>
          </tr>
        </thead>
        <tbody>
          <tr className="h-[269px]">
            <td className={`${TD} pl-[5px]! pr-1!`}>
              <p>Замечания по содержанию работы:</p>
              <div className="h-[99px] overflow-hidden [&_span:last-child]:[text-align-last:justify]">
                <Spread
                  lines={[
                    "В основной части изложении материала, начиная с",
                    "3 страницы, приводится 2 огромных примера, не",
                    "относящихся к теме статьи. Первый пример связан",
                    "с договором поставки, к нему же прилагается",
                    "картинка на 1/3 страницы. Как картинка со схемой",
                    "договора поставки в принципе может быть",
                    "вставлена в статью по данной теме? Во втором",
                    "примере говорится про убер, беспилотных",
                  ]}
                />
              </div>
              <div className="-mr-[3px] h-[91px] border-5 border-black bg-white" />
              <div className="mt-[2px]">
                <Spread
                  lines={[
                    "Исходя из всей статьи и вывода в частности, какую",
                    "научную и практическую значимость она имеет?",
                    "Это не уровень ВАК, такую статью не примет ни",
                    "один журнал.",
                  ]}
                />
              </div>
            </td>
            <td className={`${TD} pl-[5px]! pr-[2px]!`}>
              <div className="flex h-1 overflow-hidden"><span>Т</span><span className="ml-[134px]">б</span></div>
              <div className="mb-[3px] h-12 border-5 border-black bg-white" />
              <div className="leading-[19px]">
                <p>Наполняемость раскрывает указанную тему.</p>
                <p>Замечание по рисункам обосновано.</p>
                <Spread lines={["Исключая примеры, объем статьи будет не", "выдержан"]} />
                <p>Работа нуждается в корректировке.</p>
              </div>
            </td>
          </tr>
        </tbody>
      </table>
    </Sheet>
  );
}

function SecondPage() {
  return (
    <Sheet label="Страница 2">
      <table className="-ml-[6px] w-[512px] table-fixed border-collapse">
        <tbody>
          <tr className="h-[87px]">
            <td className={`${TD} pl-[5px]! pr-1!`}>
              <p>Замечания по оформлению работы:</p>
              <Spread lines={["Шрифт в некоторых местах то Georgia, то Times", "New Roman, то 10 размер, то 11 размер"]} />
            </td>
            <td className={`${TD} pl-[5px]!`}>Замечание обосновано.</td>
          </tr>
          <tr className="h-[85px]">
            <td className={`${TD} pl-[5px]!`}>Замечания по уникальности текста:<br />Нет</td>
            <td className={TD} />
          </tr>
          <tr className="h-[79px]">
            <td className={`${TD} pl-[5px]!`}>Замечания по работе сотрудников:<br />Нет</td>
            <td className={TD} />
          </tr>
        </tbody>
      </table>
      <div className="mt-[17px] text-[13px] leading-[22px]">
        <Spread lines={["Процент выполнения работы в соответствии с первоначальными требованиями заказа", "составляет 65%."]} />
      </div>
    </Sheet>
  );
}

function ScrollColumn() {
  return (
    <div className="flex w-[17px] shrink-0 flex-col items-center bg-[#a9c6ee] pr-px">
      <span className="mt-[2px] h-[2px] w-[9px] shrink-0 bg-[#2c4a78]" />
      <button aria-label="Линейка" className="mt-[2px] flex h-[17px] w-4 shrink-0 items-center justify-center border border-[#9a9fb0] bg-[#ccd2de]">
        <svg width="12" height="12" viewBox="0 0 12 12" fill="#fff" stroke="#555e70"><path d="M.5 1.500l2 1 2-1v3h7v5l-3 2-2-3h-4l-2-2z" /></svg>
      </button>
      <button aria-label="Вверх" className="flex h-[17px] w-full shrink-0 items-center justify-center bg-[#7c9acb]"><svg width="9" height="5"><path d="M0 5h9L4.500 0z" fill="#2f4d80" /></svg></button>
      <div className="flex w-[15px] flex-1 flex-col items-center justify-center gap-px border border-[#5674a6] bg-linear-to-r from-[#f0f4fa] via-[#dde4ee] to-[#c5ccdc]">
        <span className="h-px w-2 bg-[#7e93b5]" /><span className="h-px w-2 bg-[#7e93b5]" /><span className="h-px w-2 bg-[#7e93b5]" /><span className="h-px w-2 bg-[#7e93b5]" />
      </div>
      <button aria-label="Вниз" className="flex h-5 w-full shrink-0 items-center justify-center bg-[#7c9acb]"><svg width="9" height="5"><path d="M0 0h9L4.500 5z" fill="#2f4d80" /></svg></button>
      <div className="flex h-[52px] shrink-0 flex-col items-center justify-between py-[6px]">
        <button aria-label="Предыдущая страница"><svg className="block" width="6" height="7"><path d="M0 3h6L3 0zM0 6h6L3 3z" fill="#111" /></svg></button>
        <button aria-label="Выбор объекта" className="h-[7px] w-[7px] rounded-full border border-[#222] bg-[#c4cede]" />
        <button aria-label="Следующая страница"><svg className="block" width="6" height="7"><path d="M0 1h6L3 4zM0 4h6L3 7z" fill="#111" /></svg></button>
      </div>
    </div>
  );
}

function StatusBar() {
  const sep = <span className="h-4 w-px bg-[#8fb0dd] shadow-[1px_0_0_#f0f6ff]" />;
  const view = "flex flex-1 items-center justify-center border-r border-[#a9c1e4]";
  return (
    <footer className="flex h-[22px] shrink-0 items-center border-t border-[#f2f8ff] bg-linear-to-b from-[#d8e7fb] via-[#b4d0f7] to-[#cfe2fb] whitespace-nowrap text-[#1e3a78]">
      <span className="w-[101px] pl-[5px]">Страница: 1 из 2</span>
      {sep}
      <span className="w-[100px] pl-[9px] text-[#8c9bb5]">Число слов: 330</span>
      {sep}
      <svg className="ml-2" width="17" height="16" viewBox="0 0 17 16">
        <path d="M1 8l5-3 9 4-6 5z" fill="#f6f8fc" stroke="#4a68a8" />
        <path d="M1 8v3l8 4 6-5" fill="none" stroke="#4a68a8" strokeWidth="1.500" />
        <path d="M8 1l7 7M15 1L8 8" stroke="#e0492a" strokeWidth="2.200" />
      </svg>
      <span className="ml-4 w-[94px]">Русский (Россия)</span>
      {sep}
      <div className="ml-auto flex h-full items-center bg-linear-to-b from-[#b9d2f5] via-[#8fb2e8] to-[#a9c8f2] pr-1">
        {sep}
        <div className="ml-1 flex h-[18px] w-[92px] rounded-[3px] border border-[#dfeafa] bg-[#d4e1f4]">
          <button aria-label="Разметка страницы" className={`${view} bg-[#f6d98c]`}><svg width="12" height="12" fill="#fff" stroke="#5b5340"><path d="M.5.5h11v11H.5zM2 3.500h8M2 5.500h8M2 7.500h8M2 9.500h8" /></svg></button>
          <button aria-label="Режим чтения" className={view}><svg width="12" height="12" fill="#fff" stroke="#5b6780"><path d="M.5 1.500l5 1.500v8l-5-1.500zM11.500 1.500L6 3v8l5.500-1.500zM2 4l2 1M2 6l2 1M8 5l2-1M8 7l2-1" /></svg></button>
          <button aria-label="Веб-документ" className={view}><svg width="13" height="12" fill="#fff" stroke="#5b6780"><path d="M.5.5h9v8h-9zM2 3h6M2 5h6" /><circle cx="9.500" cy="8.500" r="2.500" fill="#4f9d8b" stroke="#2f6b86" /></svg></button>
          <button aria-label="Структура" className={view}><svg width="12" height="12" stroke="#7f8ca5"><path d="M0 1.500h8M3 3.500h7M5 5.500h7M3 7.500h8M0 9.500h8" strokeDasharray="2 1" /></svg></button>
          <button aria-label="Черновик" className="flex flex-1 items-center justify-center"><svg width="11" height="12" stroke="#6a7488"><path d="M0 1.500h11M0 3.500h11M0 5.500h11M0 7.500h11M0 9.500h11" /></svg></button>
        </div>
        <span className="ml-2 w-[35px]">70%</span>
        <button aria-label="Уменьшить" className="flex h-4 w-4 items-center justify-center rounded-full border border-[#5f7396] bg-[#e6edf7]"><span className="h-[2px] w-2 bg-[#4a5568]" /></button>
        <div className="relative flex h-4 w-[102px] items-center">
          <span className="absolute left-[52px] h-2 w-px bg-[#e4eefb]" />
          <input
            type="range"
            aria-label="Масштаб"
            defaultValue={33}
            className="h-4 w-full appearance-none bg-transparent bg-[linear-gradient(#e4eefb,#e4eefb)] bg-[length:100%_1px] bg-center bg-no-repeat [&::-webkit-slider-thumb]:h-3 [&::-webkit-slider-thumb]:w-[9px] [&::-webkit-slider-thumb]:appearance-none [&::-webkit-slider-thumb]:rounded-t-[1px] [&::-webkit-slider-thumb]:rounded-b-[5px] [&::-webkit-slider-thumb]:border [&::-webkit-slider-thumb]:border-[#506a96] [&::-webkit-slider-thumb]:bg-[#e6edf7]"
          />
        </div>
        <button aria-label="Увеличить" className="flex h-4 w-4 items-center justify-center rounded-full border border-[#5f7396] bg-[#e6edf7]"><svg width="8" height="8"><path d="M4 0v8M0 4h8" stroke="#4a5568" strokeWidth="2" /></svg></button>
      </div>
    </footer>
  );
}

function Taskbar() {
  return (
    <div className="relative flex h-1 shrink-0 border-t border-[#16202c] bg-linear-to-r from-[#10363f] via-[#2b7076] to-[#245560] pl-[212px]">
      <div className="absolute bottom-0 left-2 h-[9px] w-[30px] rounded-t-full border border-b-0 border-[#4b6079] bg-radial from-[#c9573a] from-20% to-[#8fa9c6]" />
      <div className="w-[158px] bg-[#c9d3d8]" />
      <div className="ml-[3px] w-[158px] bg-[#eef3f6]" />
    </div>
  );
}

export default function App() {
  return (
    <div className={`flex h-screen flex-col overflow-hidden bg-[#9dbbe3] text-[11px] ${UI}`}>
      <TitleBar />
      <TabBar />
      <Ribbon />
      <QuickAccess />
      <div className="flex min-h-0 flex-1">
        <div className="flex min-w-0 flex-1 flex-col">
          <div className="flex h-[23px] shrink-0">
            <button aria-label="Табуляция" className="flex h-[23px] w-[22px] items-center justify-center border border-[#5b7fc0] bg-[#a9c4e9]">
              <span className="flex h-[15px] w-[15px] items-center justify-center border border-[#5f7fb5] bg-[#dbe7f7]">
                <span className="h-[6px] w-[6px] border-b-2 border-l-2 border-[#222]" />
              </span>
            </button>
            <HorizontalRuler />
          </div>
          <div className="flex min-h-0 flex-1">
            <VerticalRuler />
            <main className="relative isolate flex min-w-0 flex-1 items-start gap-[10px] overflow-hidden bg-linear-to-b from-[#9dbde6] from-0% via-[#507aaf] via-72% to-[#6690ce] to-100% pt-[11px] pl-[95px]">
              <svg className="absolute top-0 left-0 -z-10" width="320" height="120" viewBox="0 0 320 120" aria-hidden="true">
                <path d="M0 0h318C260 8 150 45 96 71Q40 92 0 118z" fill="#9dbce6" />
                <path d="M0 0h310C240 8 150 42 96 62Q45 75 0 92z" fill="#aecbee" />
              </svg>
              <FirstPage />
              <SecondPage />
            </main>
          </div>
        </div>
        <ScrollColumn />
      </div>
      <StatusBar />
      <Taskbar />
    </div>
  );
}
